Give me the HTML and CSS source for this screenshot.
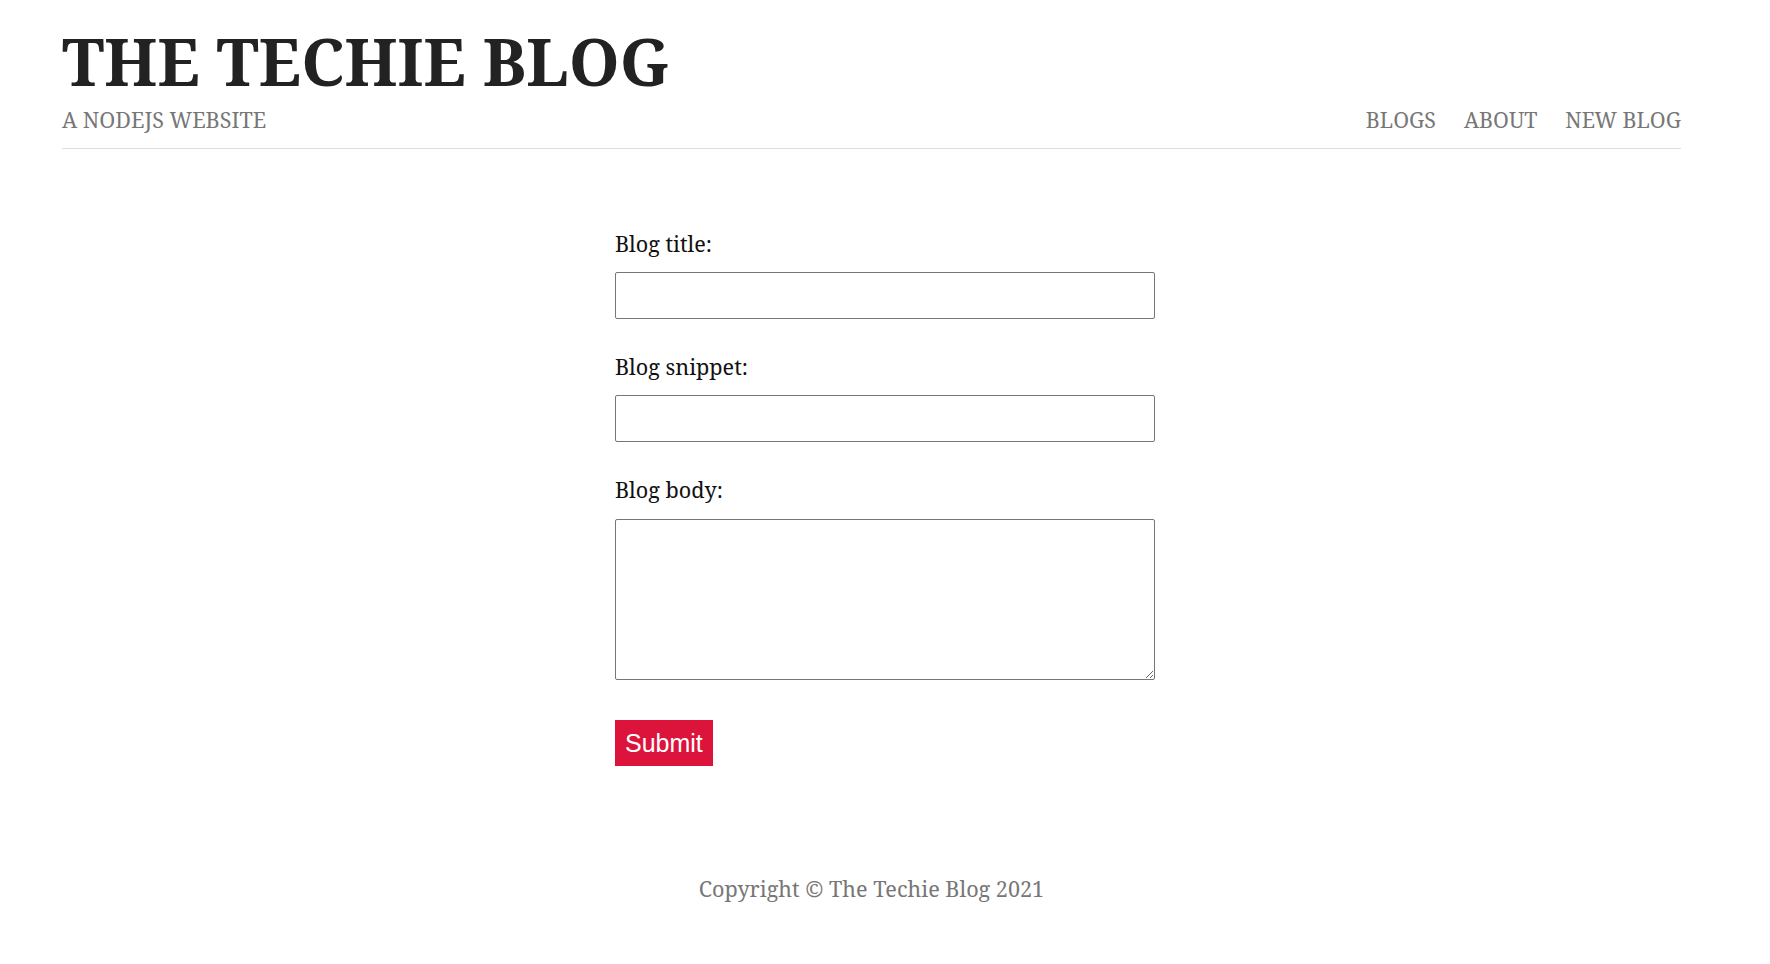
FILE: index.html
```html
<!DOCTYPE html>
<html lang="en">
<head>
<meta charset="utf-8">
<title>The Techie Blog | Create</title>
<link rel="stylesheet" href="styles.css">
</head>
<body>
<header class="site-header">
  <h1 class="site-title">THE TECHIE BLOG</h1>
  <div class="header-bar">
    <p class="tagline">A NODEJS WEBSITE</p>
    <nav class="nav">
      <a href="#" class="nav-link">BLOGS</a>
      <a href="#" class="nav-link">ABOUT</a>
      <a href="#" class="nav-link">NEW BLOG</a>
    </nav>
  </div>
</header>
<main class="create-blog">
  <form class="blog-form">
    <label class="field-label" for="title">Blog title:</label>
    <input class="field-input" type="text" id="title" name="title">
    <label class="field-label" for="snippet">Blog snippet:</label>
    <input class="field-input" type="text" id="snippet" name="snippet">
    <label class="field-label" for="body">Blog body:</label>
    <textarea class="field-textarea" id="body" name="body"></textarea>
    <button class="submit-btn" type="button">Submit</button>
  </form>
</main>
<footer class="site-footer">Copyright © The Techie Blog 2021</footer>
</body>
</html>
```

FILE: styles.css
```css
html, body {
  margin: 0;
  padding: 0;
  background: #fff;
}
body {
  font-family: "Noto Serif", "DejaVu Serif", serif;
  font-size: 21.6px;
  color: #111;
}
.site-header {
  margin: 0 89px 0 62px;
  padding-top: 24px;
  padding-bottom: 14px;
  border-bottom: 1px solid #ddd;
}
.site-title {
  margin: 0;
  font-size: 64.8px;
  font-weight: 700;
  line-height: 74px;
  color: #222;
}
.header-bar {
  margin-top: 8px;
  display: flex;
  justify-content: space-between;
  align-items: baseline;
}
.tagline {
  margin: 0;
  font-size: 21.6px;
  line-height: 28px;
  color: #777;
}
.nav {
  display: flex;
  gap: 28px;
}
.nav-link {
  font-size: 21.4px;
  line-height: 28px;
  color: #777;
  text-decoration: none;
}
.create-blog {
  padding-top: 80px;
}
.blog-form {
  width: 540px;
  margin: 0 auto;
}
.field-label {
  display: block;
  font-size: 21.6px;
  line-height: 30px;
  color: #111;
}
.field-input {
  display: block;
  box-sizing: border-box;
  width: 540px;
  height: 47px;
  margin: 13px 0 33px;
  padding: 10px;
  border: 1px solid #767676;
  border-radius: 2px;
  font-size: 18px;
  background: #fff;
}
.field-textarea {
  display: block;
  box-sizing: border-box;
  width: 540px;
  height: 161px;
  margin: 14px 0 40px;
  padding: 10px;
  border: 1px solid #767676;
  border-radius: 2px;
  font-size: 18px;
  background: #fff;
}
.submit-btn {
  display: block;
  margin: 0;
  padding: 8px 10px;
  border: 0;
  background: #dc143c;
  color: #fff;
  font-family: "Liberation Sans", Arial, sans-serif;
  font-size: 25px;
  line-height: 30px;
}
.site-footer {
  margin: 109px 89px 0 62px;
  text-align: center;
  font-size: 21.6px;
  line-height: 28px;
  color: #777;
  padding-bottom: 40px;
}
```
